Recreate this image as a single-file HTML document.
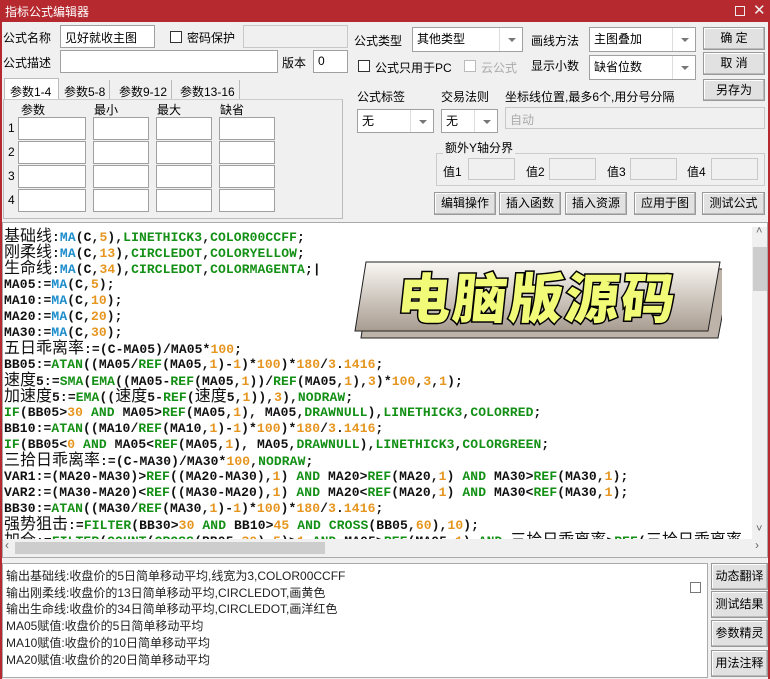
<!DOCTYPE html><html><head><meta charset="utf-8"><style>
*{box-sizing:border-box;margin:0;padding:0}
body{width:770px;height:679px;background:#f0f0f0;font-family:"Liberation Sans","Noto Sans CJK SC",sans-serif;font-size:12px;color:#000;position:relative;overflow:hidden}
.a{position:absolute;white-space:nowrap}
.in{position:absolute;background:#fff;border:1px solid #a0a0a0}
.dis{background:#f0f0f0;border:1px solid #c8c8c8}
.btn{position:absolute;background:#e1e1e1;border:1px solid #999;text-align:center;font-size:12px;line-height:20px;box-shadow:inset -1px -1px 0 #bbb,inset 1px 1px 0 #fff}
.cb{position:absolute;width:12px;height:12px;border:1px solid #333;background:#fff}
.sel{position:absolute;background:#fff;border:1px solid #a0a0a0;padding-left:4px;line-height:22px}
.sel:after{content:"";position:absolute;right:6px;top:10px;border:4px solid transparent;border-top:4px solid #777}
.sel i{position:absolute;right:22px;top:0;bottom:0;border-left:1px solid #ddd}
#code{position:absolute;left:2px;top:222px;width:766px;height:336px;background:#fff;border:1px solid #aaa;overflow:hidden}
.ln{position:absolute;left:1px;font-family:"Liberation Mono",monospace;font-weight:bold;font-size:13px;letter-spacing:0.1px;white-space:nowrap;color:#111;height:16px;line-height:16px}
.ln .c{font-family:"Liberation Sans","Noto Sans CJK SC",sans-serif;font-weight:normal;font-size:16px;letter-spacing:0}
.b{color:#1b8ccc}.g{color:#139015}.o{color:#e6951e}
</style></head><body>
<div class="a" style="left:0;top:0;width:770px;height:22px;background:#b5292f"></div>
<div class="a" style="left:5px;top:3px;color:#fff;font-size:12px">指标公式编辑器</div>
<div class="a" style="left:735px;top:6px;width:10px;height:10px;border:1px solid #eee"></div>
<div class="a" style="left:753px;top:1px;color:#eee;font-size:15px">✕</div>
<div class="a" style="left:0;top:22px;width:2px;height:657px;background:#b5292f"></div>
<div class="a" style="left:768px;top:22px;width:2px;height:657px;background:#b5292f"></div>

<div class="a" style="left:3px;top:29px">公式名称</div>
<div class="in" style="left:60px;top:25px;width:95px;height:23px;padding:3px 4px">见好就收主图</div>
<div class="cb" style="left:170px;top:31px"></div>
<div class="a" style="left:187px;top:29px">密码保护</div>
<div class="in dis" style="left:243px;top:25px;width:105px;height:23px"></div>
<div class="a" style="left:3px;top:54px">公式描述</div>
<div class="in" style="left:60px;top:50px;width:218px;height:23px"></div>
<div class="a" style="left:282px;top:54px">版本</div>
<div class="in" style="left:313px;top:50px;width:35px;height:23px;padding:3px 4px">0</div>

<div class="a" style="left:4px;top:78px;width:55px;height:22px;background:#fff;border:1px solid #bbb;border-bottom:none;padding:4px 5px">参数1-4</div>
<div class="a" style="left:60px;top:80px;padding:3px 4px;border-right:1px solid #bbb">参数5-8</div>
<div class="a" style="left:115px;top:80px;padding:3px 4px;border-right:1px solid #bbb">参数9-12</div>
<div class="a" style="left:176px;top:80px;padding:3px 4px;border-right:1px solid #bbb">参数13-16</div>
<div class="a" style="left:3px;top:99px;width:340px;height:120px;border:1px solid #bbb;border-top:1px solid #ccc;background:#f0f0f0"></div>
<div class="a" style="left:21px;top:101px">参数</div><div class="a" style="left:94px;top:101px">最小</div><div class="a" style="left:157px;top:101px">最大</div><div class="a" style="left:220px;top:101px">缺省</div>
<div class="a" style="left:8px;top:121px">1</div><div class="a" style="left:8px;top:145px">2</div><div class="a" style="left:8px;top:169px">3</div><div class="a" style="left:8px;top:193px">4</div>
<div class="in" style="left:18px;top:117px;width:68px;height:23px"></div><div class="in" style="left:93px;top:117px;width:56px;height:23px"></div><div class="in" style="left:156px;top:117px;width:56px;height:23px"></div><div class="in" style="left:219px;top:117px;width:56px;height:23px"></div>
<div class="in" style="left:18px;top:141px;width:68px;height:23px"></div><div class="in" style="left:93px;top:141px;width:56px;height:23px"></div><div class="in" style="left:156px;top:141px;width:56px;height:23px"></div><div class="in" style="left:219px;top:141px;width:56px;height:23px"></div>
<div class="in" style="left:18px;top:165px;width:68px;height:23px"></div><div class="in" style="left:93px;top:165px;width:56px;height:23px"></div><div class="in" style="left:156px;top:165px;width:56px;height:23px"></div><div class="in" style="left:219px;top:165px;width:56px;height:23px"></div>
<div class="in" style="left:18px;top:189px;width:68px;height:23px"></div><div class="in" style="left:93px;top:189px;width:56px;height:23px"></div><div class="in" style="left:156px;top:189px;width:56px;height:23px"></div><div class="in" style="left:219px;top:189px;width:56px;height:23px"></div>

<div class="a" style="left:354px;top:32px">公式类型</div>
<div class="sel" style="left:412px;top:27px;width:111px;height:25px">其他类型<i></i></div>
<div class="a" style="left:531px;top:32px">画线方法</div>
<div class="sel" style="left:589px;top:27px;width:107px;height:25px">主图叠加<i></i></div>
<div class="btn" style="left:703px;top:27px;width:62px;height:23px">确 定</div>
<div class="cb" style="left:358px;top:60px"></div>
<div class="a" style="left:375px;top:59px">公式只用于PC</div>
<div class="cb" style="left:464px;top:60px;border-color:#bbb"></div>
<div class="a" style="left:481px;top:59px;color:#aaa">云公式</div>
<div class="a" style="left:531px;top:57px">显示小数</div>
<div class="sel" style="left:589px;top:55px;width:107px;height:25px">缺省位数<i></i></div>
<div class="btn" style="left:703px;top:52px;width:62px;height:23px">取 消</div>
<div class="btn" style="left:703px;top:79px;width:62px;height:22px">另存为</div>
<div class="a" style="left:357px;top:88px">公式标签</div>
<div class="a" style="left:441px;top:88px">交易法则</div>
<div class="a" style="left:505px;top:88px">坐标线位置,最多6个,用分号分隔</div>
<div class="sel" style="left:357px;top:109px;width:77px;height:24px">无<i></i></div>
<div class="sel" style="left:441px;top:109px;width:57px;height:24px">无<i></i></div>
<div class="in dis" style="left:505px;top:107px;width:260px;height:22px;padding:3px 4px;color:#aaa">自动</div>
<div class="a" style="left:436px;top:153px;width:329px;height:33px;border:1px solid #ccc"></div>
<div class="a" style="left:443px;top:139px;background:#f0f0f0;padding:0 2px">额外Y轴分界</div>
<div class="a" style="left:443px;top:163px">值1</div><div class="in dis" style="left:468px;top:158px;width:47px;height:22px"></div>
<div class="a" style="left:526px;top:163px">值2</div><div class="in dis" style="left:549px;top:158px;width:47px;height:22px"></div>
<div class="a" style="left:607px;top:163px">值3</div><div class="in dis" style="left:630px;top:158px;width:47px;height:22px"></div>
<div class="a" style="left:687px;top:163px">值4</div><div class="in dis" style="left:711px;top:158px;width:47px;height:22px"></div>
<div class="btn" style="left:434px;top:192px;width:62px;height:23px">编辑操作</div>
<div class="btn" style="left:499px;top:192px;width:62px;height:23px">插入函数</div>
<div class="btn" style="left:565px;top:192px;width:62px;height:23px">插入资源</div>
<div class="btn" style="left:634px;top:192px;width:62px;height:23px">应用于图</div>
<div class="btn" style="left:702px;top:192px;width:63px;height:23px">测试公式</div>

<div id="code">
<div class="ln" style="top:6px"><span class="c">基础线</span>:<span class="b">MA</span>(C,<span class="o">5</span>),<span class="g">LINETHICK3</span>,<span class="g">COLOR00CCFF</span>;</div>
<div class="ln" style="top:22px"><span class="c">刚柔线</span>:<span class="b">MA</span>(C,<span class="o">13</span>),<span class="g">CIRCLEDOT</span>,<span class="g">COLORYELLOW</span>;</div>
<div class="ln" style="top:38px"><span class="c">生命线</span>:<span class="b">MA</span>(C,<span class="o">34</span>),<span class="g">CIRCLEDOT</span>,<span class="g">COLORMAGENTA</span>;|</div>
<div class="ln" style="top:54px">MA05:=<span class="b">MA</span>(C,<span class="o">5</span>);</div>
<div class="ln" style="top:70px">MA10:=<span class="b">MA</span>(C,<span class="o">10</span>);</div>
<div class="ln" style="top:86px">MA20:=<span class="b">MA</span>(C,<span class="o">20</span>);</div>
<div class="ln" style="top:102px">MA30:=<span class="b">MA</span>(C,<span class="o">30</span>);</div>
<div class="ln" style="top:118px"><span class="c">五日乖离率</span>:=(C-MA05)/MA05*<span class="o">100</span>;</div>
<div class="ln" style="top:134px">BB05:=<span class="g">ATAN</span>((MA05/<span class="g">REF</span>(MA05,<span class="o">1</span>)-<span class="o">1</span>)*<span class="o">100</span>)*<span class="o">180</span>/<span class="o">3</span>.<span class="o">1416</span>;</div>
<div class="ln" style="top:150px"><span class="c">速度</span>5:=<span class="g">SMA</span>(<span class="g">EMA</span>((MA05-<span class="g">REF</span>(MA05,<span class="o">1</span>))/<span class="g">REF</span>(MA05,<span class="o">1</span>),<span class="o">3</span>)*<span class="o">100</span>,<span class="o">3</span>,<span class="o">1</span>);</div>
<div class="ln" style="top:166px"><span class="c">加速度</span>5:=<span class="g">EMA</span>((<span class="c">速度</span>5-<span class="g">REF</span>(<span class="c">速度</span>5,<span class="o">1</span>)),<span class="o">3</span>),<span class="g">NODRAW</span>;</div>
<div class="ln" style="top:182px"><span class="g">IF</span>(BB05&gt;<span class="o">30</span> <span class="g">AND</span> MA05&gt;<span class="g">REF</span>(MA05,<span class="o">1</span>), MA05,<span class="g">DRAWNULL</span>),<span class="g">LINETHICK3</span>,<span class="g">COLORRED</span>;</div>
<div class="ln" style="top:198px">BB10:=<span class="g">ATAN</span>((MA10/<span class="g">REF</span>(MA10,<span class="o">1</span>)-<span class="o">1</span>)*<span class="o">100</span>)*<span class="o">180</span>/<span class="o">3</span>.<span class="o">1416</span>;</div>
<div class="ln" style="top:214px"><span class="g">IF</span>(BB05&lt;<span class="o">0</span> <span class="g">AND</span> MA05&lt;<span class="g">REF</span>(MA05,<span class="o">1</span>), MA05,<span class="g">DRAWNULL</span>),<span class="g">LINETHICK3</span>,<span class="g">COLORGREEN</span>;</div>
<div class="ln" style="top:230px"><span class="c">三拾日乖离率</span>:=(C-MA30)/MA30*<span class="o">100</span>,<span class="g">NODRAW</span>;</div>
<div class="ln" style="top:246px">VAR1:=(MA20-MA30)&gt;<span class="g">REF</span>((MA20-MA30),<span class="o">1</span>) <span class="g">AND</span> MA20&gt;<span class="g">REF</span>(MA20,<span class="o">1</span>) <span class="g">AND</span> MA30&gt;<span class="g">REF</span>(MA30,<span class="o">1</span>);</div>
<div class="ln" style="top:262px">VAR2:=(MA30-MA20)&lt;<span class="g">REF</span>((MA30-MA20),<span class="o">1</span>) <span class="g">AND</span> MA20&lt;<span class="g">REF</span>(MA20,<span class="o">1</span>) <span class="g">AND</span> MA30&lt;<span class="g">REF</span>(MA30,<span class="o">1</span>);</div>
<div class="ln" style="top:278px">BB30:=<span class="g">ATAN</span>((MA30/<span class="g">REF</span>(MA30,<span class="o">1</span>)-<span class="o">1</span>)*<span class="o">100</span>)*<span class="o">180</span>/<span class="o">3</span>.<span class="o">1416</span>;</div>
<div class="ln" style="top:294px"><span class="c">强势狙击</span>:=<span class="g">FILTER</span>(BB30&gt;<span class="o">30</span> <span class="g">AND</span> BB10&gt;<span class="o">45</span> <span class="g">AND</span> <span class="g">CROSS</span>(BB05,<span class="o">60</span>),<span class="o">10</span>);</div>
<div class="ln" style="top:310px"><span class="c">加仓</span>:=<span class="g">FILTER</span>(<span class="g">COUNT</span>(<span class="g">CROSS</span>(BB05,<span class="o">30</span>),<span class="o">5</span>)&gt;<span class="o">1</span> <span class="g">AND</span> MA05&gt;<span class="g">REF</span>(MA05,<span class="o">1</span>) <span class="g">AND</span> <span class="c">三拾日乖离率</span>&gt;<span class="g">REF</span>(<span class="c">三拾日乖离率</span></div>
<div class="a" style="left:0;top:316px;width:764px;height:18px;background:#f0f0f0"></div>
<div class="a" style="left:12px;top:319px;width:310px;height:12px;background:#cdcdcd"></div>
<div class="a" style="left:2px;top:315px;color:#666;font-size:12px">‹</div>
<div class="a" style="left:752px;top:315px;color:#666;font-size:12px">›</div>
<div class="a" style="left:749px;top:4px;width:16px;height:312px;background:#f0f0f0"></div>
<div class="a" style="left:750px;top:24px;width:14px;height:44px;background:#cdcdcd"></div>
<div class="a" style="left:753px;top:2px;color:#666;font-size:11px">˄</div>
<div class="a" style="left:753px;top:300px;color:#666;font-size:11px">˅</div>
</div>

<svg class="a" style="left:352px;top:255px" width="370" height="90">
<defs><linearGradient id="gr" x1="0" y1="0" x2="0" y2="1"><stop offset="0" stop-color="#faf8f4"/><stop offset="1" stop-color="#a89c90"/></linearGradient></defs>
<polygon points="15,11 375,11 362,80 5,80" fill="#bdb3a8" stroke="#222" stroke-width="1" transform="translate(4,3)"/>
<polygon points="14,7 368,7 356,76 3,76" fill="url(#gr)" stroke="#222" stroke-width="1"/>
<text x="185" y="63" text-anchor="middle" font-family="Noto Sans CJK SC,sans-serif" font-weight="900" font-size="54" fill="#f2fb78" stroke="#000" stroke-width="3" paint-order="stroke" letter-spacing="2" transform="skewX(-6) translate(5,0)">电脑版源码</text>
</svg>

<div class="a" style="left:2px;top:563px;width:706px;height:115px;background:#fff;border:1px solid #aaa"></div>
<div class="a" style="left:6px;top:568px;line-height:16.7px;font-size:12px;color:#222">输出基础线:收盘价的5日简单移动平均,线宽为3,COLOR00CCFF<br>输出刚柔线:收盘价的13日简单移动平均,CIRCLEDOT,画黄色<br>输出生命线:收盘价的34日简单移动平均,CIRCLEDOT,画洋红色<br>MA05赋值:收盘价的5日简单移动平均<br>MA10赋值:收盘价的10日简单移动平均<br>MA20赋值:收盘价的20日简单移动平均</div>
<div class="a" style="left:690px;top:582px;width:11px;height:11px;border:1px solid #777"></div>
<div class="btn" style="left:711px;top:563px;width:57px;height:27px;line-height:25px">动态翻译</div>
<div class="btn" style="left:711px;top:591px;width:57px;height:27px;line-height:25px">测试结果</div>
<div class="btn" style="left:711px;top:620px;width:57px;height:27px;line-height:25px">参数精灵</div>
<div class="btn" style="left:711px;top:650px;width:57px;height:27px;line-height:25px">用法注释</div>
</body></html>
